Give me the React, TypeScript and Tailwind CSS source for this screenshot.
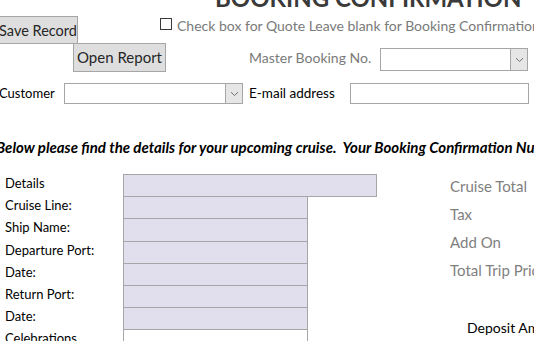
import React from "react";

const Chevron = () => (
  <svg width="9" height="6" viewBox="0 0 9 6" fill="none">
    <path d="M1 1.2 L4.5 4.5 L8 1.2" stroke="#707070" strokeWidth="1" />
  </svg>
);

const Combo = ({ w }: { w: string }) => (
  <div className={`flex h-full shrink-0 border border-[#a6a6a6] bg-white ${w}`}>
    <div className="flex-1" />
    <div className="flex w-[17px] shrink-0 items-center justify-center border-l border-[#a6a6a6] bg-[#e6e6e6]">
      <Chevron />
    </div>
  </div>
);

const labels = [
  "Details",
  "Cruise Line:",
  "Ship Name:",
  "Departure Port:",
  "Date:",
  "Return Port:",
  "Date:",
  "Celebrations",
];

export default function App() {
  return (
    <div className="h-[341px] w-[534px] overflow-hidden bg-white text-black [font-family:Lato,'Open_Sans',sans-serif]">
      {/* title */}
      <div className="-mt-[14px] h-[24px] whitespace-nowrap pl-[215px] text-[24px] font-bold leading-none text-[#3a3a3a]">
        BOOKING CONFIRMATION
      </div>

      {/* row 1 */}
      <div className="mt-[6px] flex h-[28px] items-start whitespace-nowrap">
        <button className="-ml-[2px] flex h-[28px] w-[80px] shrink-0 items-center justify-center border border-[#a6a6a6] bg-[#dedede] pt-[1px] text-[14.5px] text-[#262626]">
          Save Record
        </button>
        <div className="ml-[82px] mt-[2px] h-[12px] w-[12px] shrink-0 border border-[#3a3a3a] bg-white" />
        <span className="ml-[5px] mt-[1px] shrink-0 text-[14px] leading-[18px] text-[#7a7a7a]">
          Check box for Quote Leave blank for Booking Confirmation
        </span>
      </div>

      {/* row 2 */}
      <div className="-mt-px flex h-[29px] items-start whitespace-nowrap">
        <button className="ml-[73px] flex h-[29px] w-[93px] shrink-0 items-center justify-center border border-[#a6a6a6] bg-[#dedede] text-[15px] text-[#262626]">
          Open Report
        </button>
        <span className="ml-[83px] mt-[6px] shrink-0 text-[14px] leading-[18px] text-[#7a7a7a]">
          Master Booking No.
        </span>
        <div className="ml-auto mr-[6px] mt-[5px] h-[23px] shrink-0">
          <Combo w="w-[148px]" />
        </div>
      </div>

      {/* row 3 */}
      <div className="mt-[11px] flex h-[21px] items-center whitespace-nowrap">
        <span className="-ml-[1px] w-[65px] shrink-0 text-[13px] text-black">Customer</span>
        <div className="h-[21px] shrink-0">
          <Combo w="w-[179px]" />
        </div>
        <span className="ml-[6px] w-[101px] shrink-0 text-[13.5px] text-black">E-mail address</span>
        <div className="h-[21px] w-[179px] shrink-0 border border-[#a6a6a6] bg-white" />
      </div>

      {/* italic line */}
      <div className="mt-[35px] -ml-[4px] whitespace-nowrap text-[15px] font-bold italic leading-[16px]">
        Below please find the details for your upcoming cruise.&nbsp; Your Booking Confirmation Number
      </div>

      {/* details */}
      <div className="mt-[19px] flex">
        <div className="flex w-[123px] shrink-0 flex-col pl-[5px]">
          {labels.map((l, i) => (
            <div key={i} className="flex h-[22.2px] items-center whitespace-nowrap text-[13px] leading-none">
              <span className="-mt-[3px]">{l}</span>
            </div>
          ))}
        </div>
        <div className="flex w-[254px] shrink-0 flex-col">
          {labels.map((_, i) => (
            <div
              key={i}
              className={`h-[23.2px] shrink-0 border border-[#a6a6a6] ${i === 0 ? "w-[254px]" : "-mt-px w-[185px]"} ${
                i === 7 ? "bg-white" : "bg-[#e1dfee]"
              }`}
            />
          ))}
        </div>
        <div className="ml-[73px] flex shrink-0 flex-col whitespace-nowrap text-[15px] text-[#7f7f7f]">
          <div className="mt-[1px] h-[28px] leading-[22px]">Cruise Total</div>
          <div className="h-[28px] leading-[22px]">Tax</div>
          <div className="h-[28px] leading-[22px]">Add On</div>
          <div className="h-[28px] leading-[22px]">Total Trip Price</div>
          <div className="ml-[17px] mt-[30px] text-[14px] leading-[22px] text-black">Deposit Amount</div>
        </div>
      </div>
    </div>
  );
}
